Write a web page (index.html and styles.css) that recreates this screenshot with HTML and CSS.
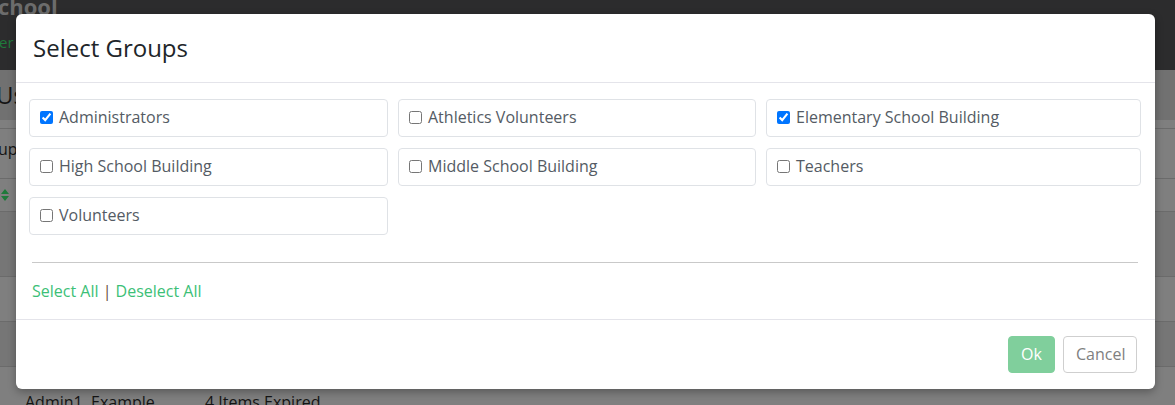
FILE: index.html
```html
<!DOCTYPE html>
<html>
<head>
<meta charset="utf-8">
<link rel="stylesheet" href="styles.css">
</head>
<body>
<div class="page">
  <header class="topbar">
    <div class="brand">school</div>
    <div class="sub">er</div>
  </header>
  <div class="title-row">Us</div>
  <div class="gap-row"></div>
  <div class="row head">up</div>
  <div class="row sort">
    <svg width="8" height="12" viewBox="0 0 8 12"><path d="M4 0L8 5H0Z M0 7H8L4 12Z" fill="#1f7a3b"/></svg>
  </div>
  <div class="row tall dark"></div>
  <div class="row mid"></div>
  <div class="row mid dark"></div>
  <div class="row last"><span class="c1">Admin1, Example</span><span class="c2">4 Items Expired</span></div>
</div>

<div class="modal">
  <div class="modal-header">
    <h4 class="modal-title">Select Groups</h4>
  </div>
  <div class="modal-body">
    <div class="groups">
      <label class="group"><input type="checkbox" checked><span>Administrators</span></label>
      <label class="group"><input type="checkbox"><span>Athletics Volunteers</span></label>
      <label class="group"><input type="checkbox" checked><span>Elementary School Building</span></label>
      <label class="group"><input type="checkbox"><span>High School Building</span></label>
      <label class="group"><input type="checkbox"><span>Middle School Building</span></label>
      <label class="group"><input type="checkbox"><span>Teachers</span></label>
      <label class="group"><input type="checkbox"><span>Volunteers</span></label>
    </div>
    <hr class="divider">
    <div class="links"><a href="#">Select All</a> <span class="sep">|</span> <a href="#">Deselect All</a></div>
  </div>
  <div class="modal-footer">
    <button class="btn btn-ok">Ok</button>
    <button class="btn btn-cancel">Cancel</button>
  </div>
</div>
</body>
</html>
```

FILE: styles.css
```css
html, body {
  margin: 0;
  padding: 0;
  width: 1175px;
  height: 405px;
  overflow: hidden;
  background: #7f7f7f;
  font-family: "Open Sans", "Noto Sans", sans-serif;
}

.page {
  width: 1175px;
  height: 405px;
  overflow: hidden;
}

.topbar {
  height: 70px;
  background: #2c2c2d;
  overflow: hidden;
}

.brand {
  font-size: 22px;
  font-weight: 700;
  color: #6c6c6c;
  line-height: 24px;
  margin-top: -6px;
  margin-left: -13px;
  white-space: nowrap;
}

.sub {
  font-size: 15px;
  color: #1f7a3b;
  margin-top: 14px;
  margin-left: -1px;
  line-height: 20px;
}

.title-row {
  height: 50px;
  background: #717171;
  font-size: 24px;
  color: #141414;
  line-height: 50px;
  margin-left: -4px;
}

.gap-row {
  height: 8px;
  background: #7f7f7f;
}

.row {
  border-top: 1px solid #6b6b6b;
  background: #7f7f7f;
  box-sizing: border-box;
}

.row.head {
  height: 50px;
  font-size: 16px;
  color: #141414;
  line-height: 40px;
  margin-left: -2px;
}

.row.sort {
  height: 33px;
  display: flex;
  align-items: center;
  padding-left: 1px;
}

.row.tall {
  height: 65px;
}

.row.mid {
  height: 45px;
}

.row.dark {
  background: #767676;
}

.row.last {
  height: 40px;
  display: flex;
  font-size: 16px;
  color: #141414;
  padding-top: 24px;
  line-height: 22px;
}

.row.last .c1 {
  margin-left: 25px;
  width: 180px;
}

.modal {
  position: absolute;
  left: 16px;
  top: 14px;
  width: 1139px;
  height: 375px;
  background: #fff;
  border-radius: 6px;
  box-shadow: 0 3px 9px rgba(0, 0, 0, 0.3);
  overflow: hidden;
}

.modal-header {
  height: 69px;
  box-sizing: border-box;
  padding: 16px 16px;
  border-bottom: 1px solid #e4e4ea;
}

.modal-title {
  margin: 0;
  font-size: 24px;
  font-weight: 400;
  line-height: 36px;
  color: #212529;
  padding-left: 1px;
}

.modal-body {
  padding: 16px 17px 16px 16px;
}

.groups {
  display: grid;
  grid-template-columns: 359px 358px 375px;
  grid-auto-rows: 38px;
  column-gap: 10px;
  row-gap: 11px;
  margin: 0 -3px 0 -3px;
}

.group {
  display: flex;
  align-items: center;
  box-sizing: border-box;
  border: 1px solid #dfe2e6;
  border-radius: 4px;
  padding-left: 10px;
  padding-bottom: 2px;
  font-size: 16px;
  color: #545b64;
  cursor: pointer;
}

.group input {
  margin: 0 6px 0 0;
  width: 13px;
  height: 13px;
}

.divider {
  margin: 27px 0 16px 0;
  border: 0;
  border-top: 1px solid #c9c9c9;
  height: 0;
}

.links {
  font-size: 16px;
  line-height: 24px;
  color: #555;
}

.links a {
  color: #3cbf77;
  text-decoration: none;
}

.links .sep {
  color: #6a5040;
}

.modal-footer {
  border-top: 1px solid #e4e4ea;
  padding: 16px 18px 16px 16px;
  display: flex;
  justify-content: flex-end;
  gap: 8px;
}

.btn {
  font-family: "Open Sans", "Noto Sans", sans-serif;
  font-size: 16px;
  line-height: 23px;
  height: 37px;
  padding: 6px 12px;
  border-radius: 4px;
  box-sizing: border-box;
}

.btn-ok {
  background: #80cf9c;
  border: 1px solid #80cf9c;
  color: #fff;
  width: 47px;
}

.btn-cancel {
  background: #fff;
  border: 1px solid #cfcfcf;
  color: #808080;
  width: 74px;
}
```
